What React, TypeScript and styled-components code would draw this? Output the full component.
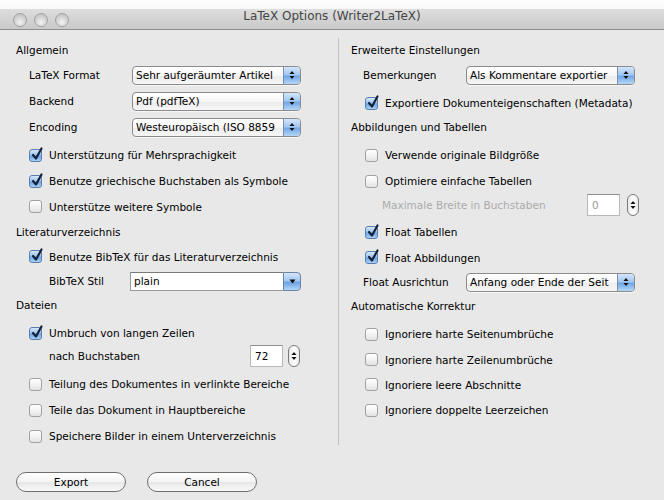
import React from "react";
import styled, { createGlobalStyle } from "styled-components";

const GlobalStyle = createGlobalStyle`
  body {
    margin: 0;
    background: #ffffff;
    font-family: "DejaVu Sans", "Liberation Sans", sans-serif;
  }
`;

const Window = styled.div`
  width: 664px;
  height: 500px;
  background: #e8e8e8;
  display: flex;
  flex-direction: column;
  overflow: hidden;
  color: #000;
  font-size: 10.5px;
`;

const TitleBar = styled.div`
  height: 29px;
  border-bottom: 1px solid #8e8e8e;
  background: linear-gradient(
    #fdfdfd 0%,
    #f8f8f8 30%,
    #dedede 31%,
    #c9c9c9 100%
  );
  display: flex;
  align-items: center;
  position: relative;
  flex-shrink: 0;
`;

const Lights = styled.div`
  display: flex;
  gap: 7px;
  padding-left: 13px;
  padding-top: 10px;
`;

const Light = styled.span`
  width: 12px;
  height: 12px;
  border-radius: 50%;
  border: 1px solid #a3a3a3;
  background: radial-gradient(circle at 50% 70%, #f2f2f2 0%, #d2d2d2 55%, #b8b8b8 100%);
`;

const Title = styled.div`
  position: absolute;
  left: 0;
  right: 0;
  top: 9px;
  text-align: center;
  font-size: 12px;
  color: #454545;
`;

const Body = styled.div`
  display: grid;
  grid-template-columns: 338px 1fr;
  align-items: start;
  padding-top: 8px;
`;

const Column = styled.div<{ $divider?: boolean }>`
  display: flex;
  flex-direction: column;
  padding-left: ${(p) => (p.$divider ? "12px" : "16px")};
  border-left: ${(p) => (p.$divider ? "1px solid #c2c2c2" : "none")};
  height: ${(p) => (p.$divider ? "407px" : "auto")};
  box-sizing: border-box;
`;

const Row = styled.div<{ $h: number; $mt?: number; $indent?: number }>`
  display: flex;
  align-items: center;
  height: ${(p) => p.$h}px;
  margin-top: ${(p) => p.$mt ?? 0}px;
  padding-left: ${(p) => p.$indent ?? 0}px;
  white-space: nowrap;
`;

const Heading = styled.span`
  font-size: 10.5px;
`;

const Label = styled.span<{ $w: number; $muted?: boolean }>`
  width: ${(p) => p.$w}px;
  flex-shrink: 0;
  color: ${(p) => (p.$muted ? "#ababab" : "#000")};
`;

const Box = styled.span<{ $on?: boolean }>`
  width: 13px;
  height: 13px;
  box-sizing: border-box;
  border-radius: 3px;
  border: 1px solid ${(p) => (p.$on ? "#5a7fae" : "#a2a2a2")};
  background: ${(p) =>
    p.$on
      ? "linear-gradient(#d6e8fb 0%, #9cc3ef 45%, #6ea5e6 55%, #a9d0f6 100%)"
      : "linear-gradient(#ffffff 0%, #f3f3f3 50%, #e2e2e2 100%)"};
  display: flex;
  align-items: center;
  justify-content: center;
  margin-right: 7px;
  flex-shrink: 0;
  position: relative;
`;

const Tick = styled.svg`
  position: absolute;
  left: 1px;
  top: -3px;
`;

const Popup = styled.div<{ $w: number }>`
  width: ${(p) => p.$w}px;
  height: 19px;
  box-sizing: border-box;
  border: 1px solid #8c8c8c;
  border-radius: 4px;
  background: linear-gradient(#ffffff 0%, #f7f7f7 50%, #ebebeb 51%, #f6f6f6 100%);
  display: flex;
  align-items: center;
  overflow: hidden;
  box-shadow: 0 1px 0 rgba(255, 255, 255, 0.6);
`;

const PopupText = styled.span`
  flex: 1;
  min-width: 0;
  padding-left: 3px;
  margin-right: 4px;
  overflow: hidden;
  white-space: nowrap;
  font-size: 10.5px;
`;

const AquaCap = styled.span`
  width: 16px;
  height: 100%;
  flex-shrink: 0;
  border-left: 1px solid #7d8fa8;
  background: linear-gradient(#d4e6fa 0%, #a3c8f1 45%, #72a8e6 55%, #b3d6f8 100%);
  display: flex;
  align-items: center;
  justify-content: center;
  border-radius: 0 3px 3px 0;
`;

const Combo = styled.div<{ $w: number }>`
  width: ${(p) => p.$w}px;
  height: 19px;
  box-sizing: border-box;
  display: flex;
  align-items: stretch;
`;

const ComboField = styled.span`
  flex: 1;
  background: #fff;
  border: 1px solid #9a9a9a;
  border-top-color: #7a7a7a;
  border-right: none;
  padding-left: 3px;
  display: flex;
  align-items: center;
`;

const ComboButton = styled.span`
  width: 16px;
  border: 1px solid #6c84a6;
  border-radius: 0 4px 4px 0;
  background: linear-gradient(#d4e6fa 0%, #a3c8f1 45%, #6aa2e4 55%, #b3d6f8 100%);
  display: flex;
  align-items: center;
  justify-content: center;
`;

const NumberField = styled.span<{ $muted?: boolean }>`
  width: 33px;
  height: 22px;
  box-sizing: border-box;
  background: #fff;
  border: 1px solid #b8b8b8;
  border-top-color: #8f8f8f;
  display: flex;
  align-items: center;
  padding-left: 4px;
  color: ${(p) => (p.$muted ? "#9a9a9a" : "#000")};
`;

const Stepper = styled.span<{ $gap: number }>`
  width: 12px;
  height: 22px;
  box-sizing: border-box;
  margin-left: ${(p) => p.$gap}px;
  border: 1px solid #7a7a7a;
  border-radius: 6px;
  background: linear-gradient(90deg, #e9e9e9, #ffffff 50%, #e9e9e9);
  display: flex;
  align-items: center;
  justify-content: center;
`;

const Footer = styled.div`
  display: flex;
  gap: 21px;
  padding-left: 16px;
  margin-top: 23px;
`;

const PushButton = styled.button`
  width: 110px;
  height: 20px;
  border: 1px solid #6f6f6f;
  border-radius: 10px;
  background: linear-gradient(#ffffff 0%, #f4f4f4 50%, #e6e6e6 51%, #fafafa 100%);
  font-family: inherit;
  font-size: 10.5px;
  color: #000;
  padding: 0;
`;

const UpDown = () => (
  <svg width="6" height="10" viewBox="0 0 6 10">
    <path d="M3 1 L5.5 4 L0.5 4 Z" fill="#111" />
    <path d="M3 9 L5.5 6 L0.5 6 Z" fill="#111" />
  </svg>
);

const Down = () => (
  <svg width="7" height="5" viewBox="0 0 7 5">
    <path d="M0.5 0.5 L6.5 0.5 L3.5 4.5 Z" fill="#111" />
  </svg>
);

const Check = ({ on, children, mt, h = 26, indent }: {
  on?: boolean;
  children: React.ReactNode;
  mt?: number;
  h?: number;
  indent: number;
}) => (
  <Row $h={h} $mt={mt} $indent={indent}>
    <Box $on={on}>
      {on && (
        <Tick width="12" height="14" viewBox="0 0 12 14">
          <path
            d="M2 8 L5 11.5 L10.5 1.5"
            fill="none"
            stroke="#15223a"
            strokeWidth="2.2"
            strokeLinecap="round"
            strokeLinejoin="round"
          />
        </Tick>
      )}
    </Box>
    {children}
  </Row>
);

const Select = ({ label, value, w = 169 }: { label: string; value: string; w?: number }) => (
  <>
    <Label $w={103}>{label}</Label>
    <Popup $w={w}>
      <PopupText>{value}</PopupText>
      <AquaCap>
        <UpDown />
      </AquaCap>
    </Popup>
  </>
);

export default function App() {
  return (
    <>
      <GlobalStyle />
      <Window>
        <TitleBar>
          <Lights>
            <Light />
            <Light />
            <Light />
          </Lights>
          <Title>LaTeX Options (Writer2LaTeX)</Title>
        </TitleBar>

        <Body>
          <Column>
            <Row $h={24}>
              <Heading>Allgemein</Heading>
            </Row>
            <Row $h={26} $indent={13}>
              <Select label="LaTeX Format" value="Sehr aufgeräumter Artikel" />
            </Row>
            <Row $h={26} $indent={13}>
              <Select label="Backend" value="Pdf (pdfTeX)" />
            </Row>
            <Row $h={26} $indent={13}>
              <Select label="Encoding" value="Westeuropäisch (ISO 8859" />
            </Row>
            <Check on mt={2} indent={13}>Unterstützung für Mehrsprachigkeit</Check>
            <Check on indent={13}>Benutze griechische Buchstaben als Symbole</Check>
            <Check h={25} indent={13}>Unterstütze weitere Symbole</Check>
            <Row $h={25}>
              <Heading>Literaturverzeichnis</Heading>
            </Row>
            <Check on h={25} indent={13}>Benutze BibTeX für das Literaturverzeichnis</Check>
            <Row $h={24} $indent={33}>
              <Label $w={81}>BibTeX Stil</Label>
              <Combo $w={171}>
                <ComboField>plain</ComboField>
                <ComboButton>
                  <Down />
                </ComboButton>
              </Combo>
            </Row>
            <Row $h={24}>
              <Heading>Dateien</Heading>
            </Row>
            <Check on mt={4} h={24} indent={13}>Umbruch von langen Zeilen</Check>
            <Row $h={22} $indent={33}>
              <Label $w={201}>nach Buchstaben</Label>
              <NumberField>72</NumberField>
              <Stepper $gap={5}>
                <UpDown />
              </Stepper>
            </Row>
            <Check mt={4} indent={13}>Teilung des Dokumentes in verlinkte Bereiche</Check>
            <Check indent={13}>Teile das Dokument in Hauptbereiche</Check>
            <Check indent={13}>Speichere Bilder in einem Unterverzeichnis</Check>
          </Column>

          <Column $divider>
            <Row $h={24}>
              <Heading>Erweiterte Einstellungen</Heading>
            </Row>
            <Row $h={26} $indent={12}>
              <Select label="Bemerkungen" value="Als Kommentare exportier" />
            </Row>
            <Check on mt={2} indent={14}>Exportiere Dokumenteigenschaften (Metadata)</Check>
            <Row $h={22}>
              <Heading>Abbildungen und Tabellen</Heading>
            </Row>
            <Check mt={4} indent={14}>Verwende originale Bildgröße</Check>
            <Check indent={14}>Optimiere einfache Tabellen</Check>
            <Row $h={22} $indent={31}>
              <Label $w={205} $muted>Maximale Breite in Buchstaben</Label>
              <NumberField $muted>0</NumberField>
              <Stepper $gap={7}>
                <UpDown />
              </Stepper>
            </Row>
            <Check on mt={3} indent={14}>Float Tabellen</Check>
            <Check on h={25} indent={14}>Float Abbildungen</Check>
            <Row $h={24} $indent={12}>
              <Select label="Float Ausrichtun" value="Anfang oder Ende der Seit" />
            </Row>
            <Row $h={24}>
              <Heading>Automatische Korrektur</Heading>
            </Row>
            <Check mt={3} indent={14}>Ignoriere harte Seitenumbrüche</Check>
            <Check h={25} indent={14}>Ignoriere harte Zeilenumbrüche</Check>
            <Check h={25} indent={14}>Ignoriere leere Abschnitte</Check>
            <Check indent={14}>Ignoriere doppelte Leerzeichen</Check>
          </Column>
        </Body>

        <Footer>
          <PushButton>Export</PushButton>
          <PushButton>Cancel</PushButton>
        </Footer>
      </Window>
    </>
  );
}
